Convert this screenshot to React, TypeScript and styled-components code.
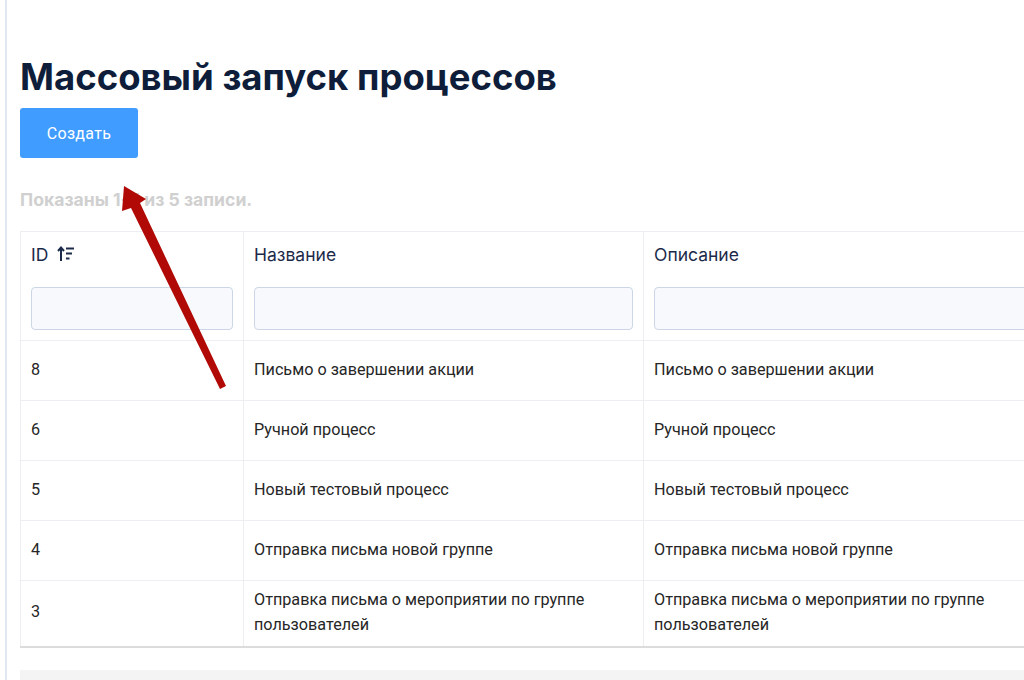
import React, { FC } from 'react';
import styled, { createGlobalStyle } from 'styled-components';

const GlobalStyle = createGlobalStyle`
  html, body {
    margin: 0;
    padding: 0;
    background: #ffffff;
    overflow: hidden;
  }
  body {
    font-family: Inter, "Noto Sans", sans-serif;
  }
`;

const Page = styled.div`
  position: relative;
  width: 1024px;
  height: 680px;
  overflow: hidden;
`;

const Content = styled.div`
  margin-left: 5px;
  border-left: 2px solid #e3e7f1;
  padding: 55px 0 0 13px;
  height: 100%;
  box-sizing: border-box;
`;

const Title = styled.h1`
  margin: 0;
  font-size: 36.5px;
  line-height: 44px;
  font-weight: 700;
  color: #0e1d3a;
  letter-spacing: 0;
`;

const CreateButton = styled.button`
  margin-top: 9px;
  width: 118px;
  height: 50px;
  border: none;
  border-radius: 3px;
  background: #409cff;
  color: #ffffff;
  font-family: Roboto, "Liberation Sans", sans-serif;
  font-size: 16px;
  letter-spacing: 0.3px;
  cursor: pointer;
`;

const Summary = styled.div`
  margin-top: 32px;
  font-size: 17.6px;
  line-height: 20px;
  font-weight: 700;
  color: #d0d0d0;
`;

const Table = styled.table`
  margin-top: 21px;
  width: 1030px;
  border-collapse: collapse;
  border-top: 1px solid #eceef2;
  border-bottom: 2px solid #dcdcdc;
  table-layout: fixed;
`;

const Col = styled.col<{ $w: number }>`
  width: ${(p) => p.$w}px;
`;

const HeadCell = styled.th`
  padding: 10px 10px 10px;
  text-align: left;
  vertical-align: top;
  border-left: 1px solid #eceef2;
  border-bottom: 1px solid #eceef2;
  font-size: 17.5px;
  font-weight: 400;
  color: #1c2a4a;
`;

const HeadLabel = styled.div`
  display: flex;
  align-items: center;
  gap: 9px;
  height: 24px;
`;

const FilterInput = styled.input`
  display: block;
  width: 100%;
  box-sizing: border-box;
  margin-top: 21px;
  height: 43px;
  border: 1px solid #cbd6e6;
  border-radius: 4px;
  background: #f7f9fc;
  outline: none;
`;

const Row = styled.tr<{ $tall?: boolean }>`
  height: ${(p) => (p.$tall ? 66 : 60)}px;
`;

const Cell = styled.td`
  padding: 0 10px 3px;
  border-left: 1px solid #eceef2;
  border-bottom: 1px solid #eceef2;
  font-family: Roboto, "Liberation Sans", sans-serif;
  font-size: 16.2px;
  line-height: 25px;
  color: #262626;
  vertical-align: middle;
`;

const Footer = styled.div`
  margin-top: 22px;
  height: 40px;
  background: #f4f4f5;
`;

const ArrowOverlay = styled.svg`
  position: absolute;
  left: 0;
  top: 0;
  pointer-events: none;
`;

const SortIcon: FC = () => (
  <svg width="18" height="18" viewBox="0 0 18 18" fill="none">
    <path d="M4 16V3" stroke="#1c2a4a" strokeWidth="2" />
    <path d="M1 6L4 2.5L7 6" stroke="#1c2a4a" strokeWidth="2" fill="none" />
    <path d="M9 3.5H17" stroke="#1c2a4a" strokeWidth="2" />
    <path d="M9 8.5H15" stroke="#1c2a4a" strokeWidth="2" />
    <path d="M9 13.5H12.5" stroke="#1c2a4a" strokeWidth="2" />
  </svg>
);

const rows = [
  { id: 8, name: 'Письмо о завершении акции' },
  { id: 6, name: 'Ручной процесс' },
  { id: 5, name: 'Новый тестовый процесс' },
  { id: 4, name: 'Отправка письма новой группе' },
  { id: 3, name: 'Отправка письма о мероприятии по группе пользователей' },
];

const App: FC = () => {
  return (
    <Page>
      <GlobalStyle />
      <Content>
        <Title>Массовый запуск процессов</Title>
        <CreateButton>Создать</CreateButton>
        <Summary>Показаны 1-5 из 5 записи.</Summary>
        <Table>
          <colgroup>
            <Col $w={223} />
            <Col $w={400} />
            <Col $w={407} />
          </colgroup>
          <thead>
            <tr>
              <HeadCell>
                <HeadLabel>
                  ID <SortIcon />
                </HeadLabel>
                <FilterInput />
              </HeadCell>
              <HeadCell>
                <HeadLabel>Название</HeadLabel>
                <FilterInput />
              </HeadCell>
              <HeadCell>
                <HeadLabel>Описание</HeadLabel>
                <FilterInput />
              </HeadCell>
            </tr>
          </thead>
          <tbody>
            {rows.map((r, i) => (
              <Row key={r.id} $tall={i === rows.length - 1}>
                <Cell>{r.id}</Cell>
                <Cell>{r.name}</Cell>
                <Cell>{r.name}</Cell>
              </Row>
            ))}
          </tbody>
        </Table>
        <Footer />
      </Content>
      <ArrowOverlay width="1024" height="680" viewBox="0 0 1024 680">
        <path
          d="M124 186 L146 199 L140 203 L226 386 L220 389 L131 208 L122 211 Z"
          fill="#b10a06"
        />
      </ArrowOverlay>
    </Page>
  );
};

export default App;
